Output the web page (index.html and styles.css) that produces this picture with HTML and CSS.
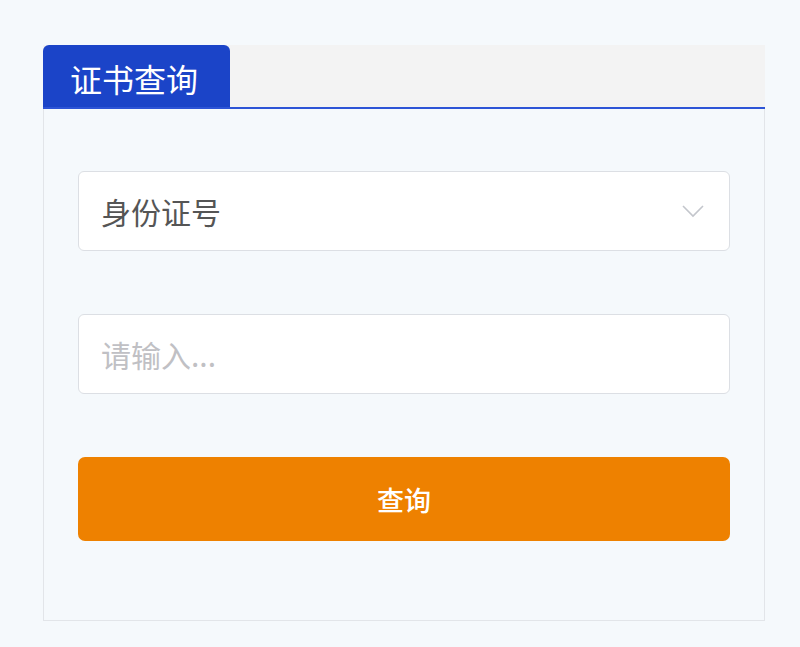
FILE: index.html
```html
<!DOCTYPE html>
<html lang="zh-CN">
<head>
  <meta charset="UTF-8">
  <title>证书查询</title>
  <link rel="stylesheet" href="styles.css">
</head>
<body>

<div class="panel">
  <div class="tabs">
    <div class="tab active">证书查询</div>
  </div>

  <div class="panel-body">
    <!-- query type -->
    <div class="select">
      <span class="select-value">身份证号</span>
      <svg class="arrow" width="24" height="16" viewBox="0 0 24 16">
        <path d="M2 3 L12 13 L22 3" fill="none" stroke="#c3c6cc" stroke-width="1.6"/>
      </svg>
    </div>

    <input type="text" class="field" placeholder="请输入...">

    <button class="btn-query">查询</button>
  </div>
</div>

</body>
</html>
```

FILE: styles.css
```css
body {
  margin: 0;
  height: 647px;
  background: #f5f9fc;
  font-family: "Noto Sans CJK SC", "Noto Sans", sans-serif;
}
.panel {
  width: 722px;
  margin: 0 0 0 43px;
  padding-top: 45px;
}
.tabs {
  display: flex;
  height: 62px;
  background: #f3f3f3;
  border-bottom: 2px solid #2d54d6;
}
.tab {
  box-sizing: border-box;
  width: 187px;
  padding: 4px 0 0 27px;
  background: #1b44c8;
  color: #fff;
  font-size: 32px;
  line-height: 58px;
  border-radius: 6px 6px 0 0;
}
.panel-body {
  display: flex;
  flex-direction: column;
  gap: 63px;
  padding: 62px 34px 79px;
  border: 1px solid #e2e5e9;
  border-top: none;
}
.select, .field {
  box-sizing: border-box;
  height: 80px;
  background: #fff;
  border: 1px solid #dcdfe4;
  border-radius: 6px;
}
.select {
  display: flex;
  align-items: center;
  justify-content: space-between;
  padding: 0 24px 0 22px;
}
.select-value {
  font-size: 30px;
  color: #555;
}
.field {
  width: 100%;
  padding: 0 22px;
  font-family: inherit;
  font-size: 30px;
  color: #555;
  outline: none;
}
.field::placeholder {
  color: #c0c0c4;
}
.btn-query {
  height: 84px;
  border: none;
  border-radius: 7px;
  background: #ee8100;
  color: #fff;
  font-family: inherit;
  font-size: 27px;
  font-weight: 500;
  cursor: pointer;
}
```
